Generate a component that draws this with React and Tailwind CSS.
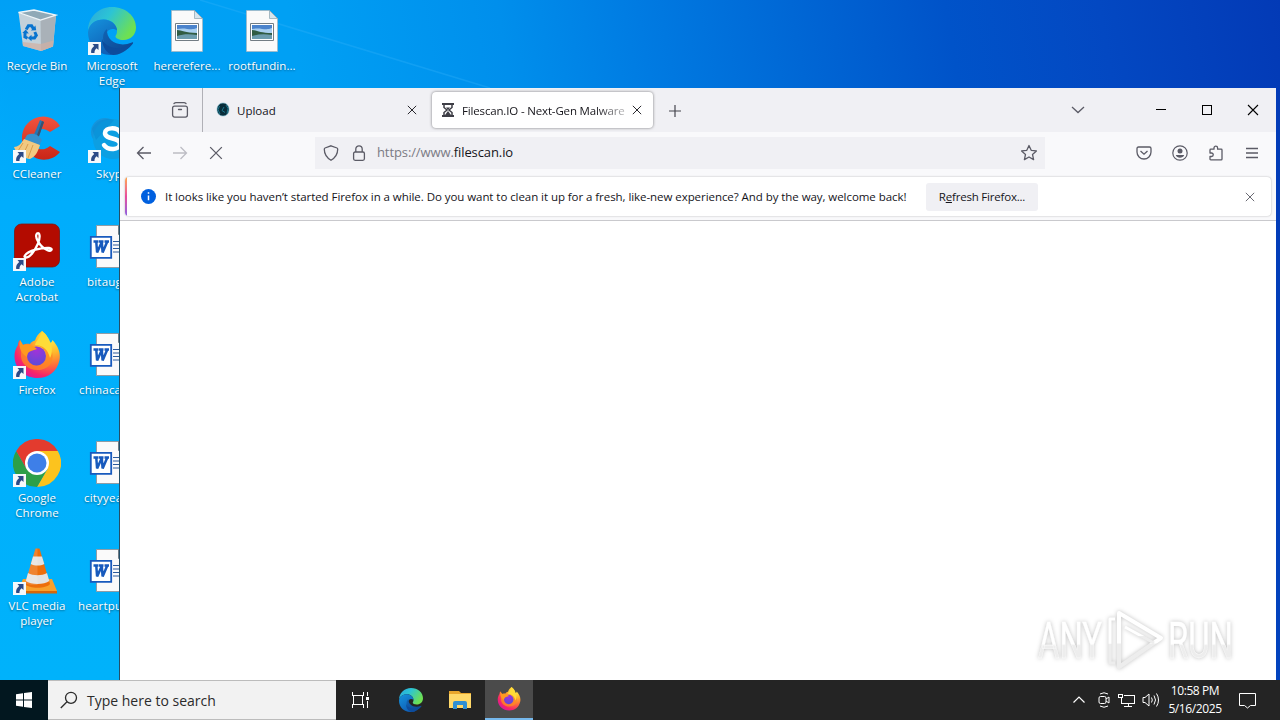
import React from 'react';

const ShortcutArrow = () => (
    <svg viewBox="0 0 13 13" className="absolute left-0 bottom-0 h-[13px] w-[13px]">
        <path d="M0 0h13v13H0z" fill="#f5f8fb" />
        <path d="M4.500 2h6v6L8.600 6.200C7 7.600 6.300 9 6.500 11H3.200C2.600 8.200 4 5.700 6.200 4z" fill="#2b4a87" />
    </svg>
);

const RecycleBin = () => (
    <svg viewBox="0 0 48 48" className="h-12 w-12">
        <path d="M5.500 5.500L10 39l18 5 12-4.500L43 8 27 11z" fill="#c3d1da" />
        <path d="M27.500 13L28 44l12-4.500L43 8z" fill="#a9b1b8" />
        <path d="M9.500 35l.5 4 18 5 12-4.500.6-6L28 37z" fill="#d0b0a4" opacity=".75" />
        <path d="M5.500 5.500L21 3l22 5-15.500 5z" fill="#8fa9b7" stroke="#eef5f9" strokeWidth="1.300" />
        <g fill="none" stroke="#0874cf" strokeWidth="3">
            <path d="M13.200 22.500l2.200-3.800h3.200l1.900 3.200" />
            <path d="M21.800 25l1.500 3.300-1.800 2.600h-3.600" />
            <path d="M14.500 31.200l-2.600-1.400.2-4" />
        </g>
        <path d="M18 23.500l5.200-.3-.8-4.800zM18.500 27.800v6.400l-3.700-3.100zM9.300 26l3.500-3.600 3 4.200z" fill="#0874cf" />
    </svg>
);

const EdgeLogo = ({ id, className }) => (
    <svg viewBox="0 0 48 48" className={className}>
        <defs>
            <linearGradient id={id + 'a'} x1="0" y1="0" x2="1" y2=".5">
                <stop offset="0" stopColor="#2aa5dc" />
                <stop offset=".45" stopColor="#2cc4d5" />
                <stop offset="1" stopColor="#6ee052" />
            </linearGradient>
            <linearGradient id={id + 'b'} x1="0" y1="0" x2=".6" y2="1">
                <stop offset="0" stopColor="#1593dd" />
                <stop offset="1" stopColor="#0f5eb5" />
            </linearGradient>
            <linearGradient id={id + 'c'} x1="0" y1="0" x2="1" y2="1">
                <stop offset="0" stopColor="#1164b4" />
                <stop offset="1" stopColor="#0d4590" />
            </linearGradient>
        </defs>
        <path d="M0 24C0 10 10.500 0 24 0c14 0 24 9.500 24 20.500C48 28 42.500 33 35.500 33c-5 0-8-2-8-3.500 0-1 1.500-2 1.500-5.500 0-6-5.500-11.500-13-11.500C7 12.500 1 18 0 24z" fill={`url(#${id}a)`} />
        <path d="M0 25C1 17 7 12.500 15.500 12.500c7.500 0 13.500 5 13.500 11-8-5-14 4-10 11 3 6 7 10 13 12C14 52 0 41 0 25z" fill={`url(#${id}b)`} />
        <path d="M19 22c-5 3-5.500 13 0 18.500 7.500 7.500 20 4.500 26-4 .5-1-.4-1.500-1.200-1C31 41 18 34 19 22z" fill={`url(#${id}c)`} />
        <path d="M14 32c3 9 19 13 30 4.500C39 44 32 48 25 48c-7-2-11-9-11-16z" fill="#0d4c9c" />
    </svg>
);

const PictureFile = () => (
    <svg viewBox="0 0 48 48" className="h-12 w-12">
        <path d="M8.500 3.500h23l8 8v33h-31z" fill="#fafafa" stroke="#a9b4bb" strokeWidth=".7" />
        <path d="M31.500 3.500v8h8z" fill="#d5e5ee" stroke="#8aa0ad" strokeWidth=".7" />
        <path d="M12.500 16.500h23v17h-23z" fill="#fff" stroke="#737d84" />
        <path d="M14 18h20v14H14z" fill="#a9cff0" />
        <path d="M14 18h20v3c-7 3-11-1-20 1z" fill="#4b83cc" />
        <path d="M14 23c5 0 8 3 20 3v3H14z" fill="#315c43" />
        <path d="M14 29c6-2 13-2 20-1v4H14z" fill="#6c9cae" />
    </svg>
);

const CCleaner = () => (
    <svg viewBox="0 0 48 48" className="h-12 w-12">
        <defs>
            <linearGradient id="cc" x1="0" y1="0" x2="0" y2="1">
                <stop stopColor="#f1533e" />
                <stop offset="1" stopColor="#c92517" />
            </linearGradient>
        </defs>
        <path d="M47 11L37 17c-9-7-17-1-17 8 0 8 9 13 17 6l10 6c-6 8-18 10-26 5C2 31 7 6 26 2c8-2 17 2 21 9z" fill="url(#cc)" />
        <path d="M27 5l4 2-6 17-5-2z" fill="#2477b5" />
        <path d="M29 6l2 1-6 17-2-1z" fill="#3c506c" />
        <path d="M14 20c6-3 12 0 15 5l-3 6-15-6z" fill="#3791cd" />
        <path d="M11 24l16 6c-2 7-5 12-10 14C9 43 3 38 1 32c4 0 7-3 10-8z" fill="#f2c981" />
        <path d="M10 28L5 36M15 29l-5 11M20 30l-5 13" stroke="#d99d4c" />
    </svg>
);

const Acrobat = () => (
    <svg viewBox="0 0 48 48" className="h-12 w-12">
        <rect x="1.500" y="1" width="45" height="43" rx="7" fill="#b30b00" stroke="#7e1712" strokeWidth=".8" />
        <path d="M12 32.500c3-5 17-8 24-7.500 5 .5 2 4-2 2-7-3-13-13-10-16.500 3-2 3.500 4 1 10-2.500 6-8 14-11.500 14-2 0-2.500-.8-1.500-2z" fill="none" stroke="#fff" strokeWidth="2.300" />
    </svg>
);

const FirefoxLogo = ({ id, className }) => (
    <svg viewBox="0 0 48 48" className={className}>
        <defs>
            <radialGradient id={id + 'a'} cx=".8" cy=".12" r="1">
                <stop offset="0" stopColor="#fff44f" />
                <stop offset=".35" stopColor="#ffb72b" />
                <stop offset=".6" stopColor="#ff7139" />
                <stop offset=".85" stopColor="#f5246a" />
                <stop offset="1" stopColor="#d817a0" />
            </radialGradient>
            <radialGradient id={id + 'b'} cx=".5" cy=".2" r=".8">
                <stop offset="0" stopColor="#a332d8" />
                <stop offset="1" stopColor="#5b4bd8" />
            </radialGradient>
        </defs>
        <path d="M29 0c5 4 6.500 7 7 12 2 0 3-1 3.500-3C45 15 48 22 46.500 29 44 41 35 47 24.500 47 12 47 2 38 1.500 26c-.3-5 1.500-9 3.500-12 0-2 .5-4 2-5l3 5c2-1 4-1.500 7-1 1-2 3-3 5-3.500C23 6 25 3 29 0z" fill={`url(#${id}a)`} />
        <path d="M17 13c-2 3 0 4 5 5-1 2-3 3-5.500 4-2 1-2 3-2 4C16 35 26 37 31 31c5-6 1-15-7-17 4-3 13 0 15 7 3 11-5 18-14 18C14 39 7 32 8 22c0-4 4-8 9-9z" fill="#ff8a22" opacity=".75" />
        <circle cx="23.500" cy="25" r="9.500" fill={`url(#${id}b)`} />
        <path d="M7 9l3 5c3-1 7 0 10 1l4 3c-2 1-4 1-6 2-3 1-4 3-4 6-5-3-9-9-7-17z" fill="#ff9a20" />
        <path d="M29 0c-2 7-6 10-7 14 8 0 13 5 15 13 5-8 0-21-8-27z" fill="#ffdc38" />
    </svg>
);

const Chrome = () => (
    <svg viewBox="0 0 48 48" className="h-12 w-12">
        <path d="M24 24L3.200 12A24 24 0 0 1 44.800 12z" fill="#e33b2e" />
        <path d="M24 12h20.800A24 24 0 0 1 24 48l10.400-18z" fill="#fcc31e" />
        <path d="M3.200 12A24 24 0 0 0 24 48l10.400-18L24 34 13.600 30z" fill="#2c9f48" />
        <path d="M3.200 12l10.400 18L24 12z" fill="#e33b2e" />
        <circle cx="24" cy="24" r="12" fill="#fff" />
        <circle cx="24" cy="24" r="9.500" fill="#3e7fe8" />
    </svg>
);

const Vlc = () => (
    <svg viewBox="0 0 48 48" className="h-12 w-12">
        <path d="M10 32h29l5 12H5z" fill="#f8a02c" />
        <path d="M5 44h39v2.500H5z" fill="#d66708" />
        <path d="M22.500 1.500h4L37 37c-4 5-21 5-25 0z" fill="#ed6e0b" />
        <path d="M20 9.500h9l2.300 7.500c-4 2-9.500 2-13.500 0zM15 26c5 3 14 3 19 0l2.300 8c-5 4-18.500 4-23.500 0z" fill="#e4e2e0" />
        <path d="M22.500 1.500h2V38c-5 0-9 0-12.500-2z" fill="#fff" opacity=".15" />
    </svg>
);

const WordFile = () => (
    <svg viewBox="0 0 48 48" className="h-12 w-12">
        <path d="M8.500 2.500h24l7 7v35h-31z" fill="#fafafa" stroke="#8f9ca5" />
        <path d="M30.500 2.500v9h9z" fill="#d9dee2" stroke="#707c85" />
        <path d="M25 18.500h11M25 22h11M25 25.500h11M25 29h11" stroke="#2c5b9d" />
        <path d="M2.800 13.800h20.400v21H2.800z" fill="#fff" stroke="#185abd" strokeWidth="1.800" />
        <path d="M5.500 18.500h5M11 18.500h4.500M16.500 18.500h4.500M8.300 19l.8 10.500 4.700-10.500 .8 10.500 4.500-10.500" fill="none" stroke="#185abd" strokeWidth="2.500" />
    </svg>
);

const Skype = () => (
    <svg viewBox="0 0 48 48" className="h-12 w-12">
        <circle cx="17" cy="17" r="14" fill="#1595dc" />
        <circle cx="25" cy="24" r="20" fill="#0d9fe2" />
        <path d="M4 14C8 5 18 2 26 5L8 25z" fill="#078ad2" opacity=".5" />
        <path d="M32 17c-3-5-15-5-15 1 0 7 15 4 15 11 0 6-12 7-16 1" fill="none" stroke="#fff" strokeWidth="4.500" strokeLinecap="round" />
    </svg>
);

const columns = [
    {
        left: 'left-0',
        items: [
            { icon: <RecycleBin />, label: 'Recycle Bin' },
            { icon: <CCleaner />, label: 'CCleaner', shortcut: true },
            { icon: <Acrobat />, label: 'Adobe Acrobat', shortcut: true },
            { icon: <FirefoxLogo id="fx" className="h-12 w-12" />, label: 'Firefox', shortcut: true },
            { icon: <Chrome />, label: 'Google Chrome', shortcut: true },
            { icon: <Vlc />, label: 'VLC media player', shortcut: true }
        ]
    },
    {
        left: 'left-[75px]',
        items: [
            { icon: <EdgeLogo id="edge" className="h-12 w-12" />, label: 'Microsoft Edge', shortcut: true },
            { icon: <Skype />, label: 'Skype', shortcut: true, pad: 'pl-[21px]' },
            { icon: <WordFile />, label: 'bitaug', pad: 'pl-[12px]' },
            { icon: <WordFile />, label: 'chinaca', pad: 'pl-[4px]' },
            { icon: <WordFile />, label: 'cityyea', pad: 'pl-[9px]' },
            { icon: <WordFile />, label: 'heartpu', pad: 'pl-[3px]' }
        ]
    },
    { left: 'left-[150px]', items: [{ icon: <PictureFile />, label: 'hererefere...' }] },
    { left: 'left-[225px]', items: [{ icon: <PictureFile />, label: 'rootfundin...' }] }
];

const DesktopItem = ({ icon, label, shortcut, pad }) => (
    <div className="flex h-[108px] w-[74px] flex-col items-center pt-[7px]">
        <div className="relative h-12 w-12 shrink-0">
            {icon}
            {shortcut && <ShortcutArrow />}
        </div>
        <div className={`mt-[3px] w-full text-[11.5px] leading-[15px] text-white [text-shadow:0_1px_2px_rgba(0,0,0,0.45)] ${pad ? pad + ' whitespace-nowrap tracking-[0.2px]' : 'text-center tracking-[0.05px]'}`}>
            {label}
        </div>
    </div>
);

const Close = ({ className }) => (
    <svg viewBox="0 0 12 12" className={className} fill="none" stroke="currentColor" strokeWidth="1.100">
        <path d="M1 1l10 10M11 1L1 11" />
    </svg>
);

const TabBar = () => (
    <div className="flex h-11 shrink-0 bg-[#f0f0f4] text-[11.5px] text-[#15141a]">
        <div className="flex w-[83px] items-center border-r border-[#b0b0b6] pl-[51px]">
            <svg viewBox="0 0 18 18" className="h-[18px] w-[18px]" fill="none" stroke="#5b5b66" strokeWidth="1.300" strokeLinecap="round">
                <rect x="1.600" y="5.100" width="14.800" height="11" rx="2" />
                <path d="M3 2.500Q4 1.600 5 1.600h8q1 0 2 .9M7.500 8.500h3" />
            </svg>
        </div>
        <div className="flex w-[229px] items-center pl-[12px]">
            <svg viewBox="0 0 16 16" className="h-4 w-4">
                <path d="M8 1c4 0 6 3.500 6 6.500S12 14 8 14s-6-3.500-6-6.500S4 1 8 1z" fill="#082d3a" stroke="#79bdd4" strokeWidth=".6" />
                <path d="M4.500 4L3 7.500 5 12M11 3l2 3.500-1 5M9 5L7 8.500l3 2" fill="none" stroke="#218aa5" strokeWidth=".8" />
            </svg>
            <span className="ml-[6px] w-[170px] pt-[2px]">Upload</span>
            <Close className="h-[10px] w-[10px]" />
        </div>
        <div className="mt-1 flex h-9 w-[221px] items-center rounded bg-white pl-[9px] shadow-[0_0_3px_rgba(0,0,0,0.5)]">
            <svg viewBox="0 0 14 16" className="h-4 w-[14px]" fill="none" stroke="#3e3e46">
                <path d="M1 2h12M1 14h12" strokeWidth="2" />
                <path d="M3 2v3.500L6 8l-3 2.500V14M11 2v3.500L8 8l3 2.500V14" strokeWidth="1.500" />
                <path d="M5 5.500h4L7 8zM7 9l3 4H4z" fill="#3e3e46" stroke="none" />
            </svg>
            <span className="ml-[7px] w-[167px] overflow-hidden pt-[2px] tracking-[-0.16px] whitespace-nowrap [mask-image:linear-gradient(to_right,black_80%,transparent_105%)]">
                Filescan.IO - Next-Gen Malware
            </span>
            <Close className="ml-[3px] h-[10px] w-[10px] shrink-0" />
        </div>
        <div className="flex w-[43px] items-center justify-center pt-px">
            <svg viewBox="0 0 14 14" className="h-[14px] w-[14px]" stroke="#45454d" strokeWidth="1.200"><path d="M7 1v12M1 7h12" /></svg>
        </div>
        <div className="ml-auto flex items-center pr-[17px] text-black">
            <svg viewBox="0 0 14 14" className="mr-[70px] h-[14px] w-[14px]" fill="none" stroke="#5b5b66" strokeWidth="1.300"><path d="M1 4l6 5.500L13 4" /></svg>
            <svg viewBox="0 0 12 12" className="mr-[34px] h-3 w-3" stroke="currentColor" shapeRendering="crispEdges"><path d="M1 5.500h10" /></svg>
            <svg viewBox="0 0 12 12" className="mr-[34px] h-3 w-3" fill="none" stroke="currentColor" shapeRendering="crispEdges"><path d="M1.500 1.500h9v9h-9z" /></svg>
            <Close className="h-3 w-3" />
        </div>
    </div>
);

const Toolbar = () => (
    <div className="flex h-[41px] shrink-0 items-center bg-[#f9f9fb] text-[#5b5b66]">
        <svg viewBox="0 0 16 16" className="ml-4 h-4 w-4" fill="none" stroke="currentColor" strokeWidth="1.300"><path d="M15 8H1.500M7.500 2L1.500 8l6 6" /></svg>
        <svg viewBox="0 0 16 16" className="ml-5 h-4 w-4 text-[#bdbdc4]" fill="none" stroke="currentColor" strokeWidth="1.300"><path d="M1 8h13.500M8.500 2l6 6-6 6" /></svg>
        <Close className="ml-[21px] h-[14px] w-[14px]" />
        <div className="ml-[92px] flex h-8 w-[730px] items-center bg-[#f0f0f4] pl-2">
            <svg viewBox="0 0 16 16" className="h-4 w-4" fill="none" stroke="currentColor" strokeWidth="1.300"><path d="M8 .8l6 2.200q.7.300.7 1.200c0 5-2.500 8.500-6.700 11C3.800 12.700 1.300 9.200 1.300 4.200q0-.9.7-1.200z" /></svg>
            <svg viewBox="0 0 16 16" className="ml-3 h-4 w-4" fill="none" stroke="currentColor" strokeWidth="1.300"><rect x="2.600" y="7" width="10.800" height="8.300" rx="1.500" /><path d="M4.800 7V4a3.200 3.200 0 0 1 6.400 0v3" /></svg>
            <span className="ml-[10px] pt-px text-[13px] tracking-[-0.1px] text-[#7b7b84]">https://www.<span className="text-[#15141a]">filescan.io</span></span>
            <svg viewBox="0 0 18 18" className="mr-[7px] ml-auto h-[18px] w-[18px]" fill="none" stroke="currentColor" strokeWidth="1.300" strokeLinejoin="round"><path d="M9 1.500l2.200 4.800 5.200.6-3.900 3.500 1.100 5.200L9 13l-4.600 2.600 1.100-5.200L1.600 6.900l5.200-.6z" /></svg>
        </div>
        <div className="ml-auto flex items-center gap-5 pr-4">
            <svg viewBox="0 0 16 16" className="h-4 w-4" fill="none" stroke="currentColor" strokeWidth="1.300"><path d="M2.500 2h11q1.500 0 1.500 1.500V7A7 7 0 0 1 1 7V3.500Q1 2 2.500 2z" /><path d="M4.500 6L8 9.200 11.500 6" /></svg>
            <svg viewBox="0 0 16 16" className="h-4 w-4" fill="none" stroke="currentColor" strokeWidth="1.200"><circle cx="8" cy="8" r="7.200" /><circle cx="8" cy="6" r="2.500" fill="currentColor" stroke="none" /><path d="M3.800 10h8.400c-1 3.500-7.400 3.500-8.400 0z" fill="currentColor" stroke="none" /></svg>
            <svg viewBox="0 0 16 16" className="h-4 w-4" fill="none" stroke="currentColor" strokeWidth="1.300" strokeLinejoin="round"><path d="M2 8V5q0-.8.8-.8H6V3a1.800 1.800 0 0 1 3.600 0v1.200h3.600q.8 0 .8.800v9q0 .9-.8.9H2.800q-.8 0-.8-.9v-2.500h1.500a1.700 1.700 0 0 0 0-3.500z" /></svg>
            <svg viewBox="0 0 16 16" className="h-4 w-4" stroke="currentColor" strokeWidth="1.300"><path d="M2 3.500h12M2 8h12M2 12.500h12" /></svg>
        </div>
    </div>
);

const InfoBar = () => (
    <div className="h-12 shrink-0 border-b border-[#c9c9cd] bg-[#f9f9fb] px-[5px] pt-1">
        <div className="flex h-[39px] items-center overflow-hidden rounded bg-white pr-4 text-[11.5px] text-[#15141a] shadow-[0_0_2px_rgba(0,0,0,0.3)]">
            <div className="h-full w-[2px] bg-linear-to-b from-[#ffa640] via-[#e84a9c] to-[#8b5ce0]" />
            <svg viewBox="0 0 16 16" className="ml-[14px] h-[15px] w-[15px] shrink-0"><circle cx="8" cy="8" r="8" fill="#0060df" /><path d="M8 3.500v1.600M8 7v5" stroke="#fff" strokeWidth="1.600" /></svg>
            <span className="ml-[9px] w-[761px] pt-px tracking-[-0.06px] whitespace-nowrap">
                It looks like you haven’t started Firefox in a while. Do you want to clean it up for a fresh, like-new experience? And by the way, welcome back!
            </span>
            <div className="flex h-7 w-[112px] items-center justify-center rounded-[3px] bg-[#f0f0f4] pt-px tracking-[-0.2px]">
                <span>R<span className="underline">e</span>fresh Firefox...</span>
            </div>
            <Close className="ml-auto h-[10px] w-[10px] text-[#5b5b66]" />
        </div>
    </div>
);

const Watermark = () => (
    <svg viewBox="0 0 200 66" className="absolute right-[41px] bottom-[6px] h-[66px] w-[200px] overflow-visible [filter:drop-shadow(0_0_2px_rgba(0,0,0,0.25))]">
        <defs>
            <linearGradient id="fade" x1="0" y1="0" x2="0" y2="1">
                <stop offset=".55" stopColor="#ffffff" />
                <stop offset=".58" stopColor="#ededed" />
            </linearGradient>
        </defs>
        <g fill="url(#fade)" stroke="#fff" strokeWidth=".4" fontFamily="Roboto, sans-serif" fontSize="50">
            <text x="3" y="50" textLength="64" lengthAdjust="spacingAndGlyphs">ANY</text>
            <text x="133" y="50" textLength="65" lengthAdjust="spacingAndGlyphs">RUN</text>
        </g>
        <g fill="none" stroke="url(#fade)" strokeWidth="4" strokeLinejoin="round">
            <path d="M84 50V5l42 25-42 29V5" />
            <path d="M80 11h-5v44h5" strokeWidth="3" />
            <path d="M90 19l29 16" strokeWidth="3" />
        </g>
    </svg>
);

const BrowserWindow = () => (
    <div className="absolute top-[88px] left-[119px] flex h-[592px] w-[1157px] flex-col border-l border-[#244f68] bg-white">
        <TabBar />
        <Toolbar />
        <InfoBar />
        <div className="relative flex-1 bg-white">
            <Watermark />
        </div>
    </div>
);

const Taskbar = () => (
    <div className="flex h-10 shrink-0 bg-[#242424] text-white">
        <div className="flex w-12 items-center justify-center bg-[#02171f]">
            <svg viewBox="0 0 16 16" className="h-4 w-4" fill="#fff"><path d="M0 2.200l7-1v6.300H0zM8 1.100L16 0v7.500H8zM0 8.500h7v6.300l-7-1zM8 8.500h8V16l-8-1.100z" /></svg>
        </div>
        <div className="flex w-72 items-center border-t border-b border-[#bcbcbc] bg-[#f2f2f2] pl-3 text-[#2b2b2b]">
            <svg viewBox="0 0 18 18" className="h-[18px] w-[18px]" fill="none" stroke="currentColor" strokeWidth="1.300"><circle cx="11" cy="6.800" r="5.500" /><path d="M7 10.800L.8 17" /></svg>
            <span className="ml-[9px] pt-px text-[14px]">Type here to search</span>
        </div>
        <div className="flex w-[48px] items-center justify-center">
            <svg viewBox="0 0 17 16" className="h-4 w-[17px]" fill="none" stroke="#fff" shapeRendering="crispEdges"><path d="M.5 0v3.500h11V0M.5 16v-3.500h11V16M1.500 3.500h9v9h-9zM15.500 0v4M15.500 9v7" /><path d="M14 5h3v3h-3z" fill="#fff" stroke="none" /></svg>
        </div>
        <div className="flex w-[54px] items-center justify-center">
            <EdgeLogo id="edgeTask" className="h-6 w-6" />
        </div>
        <div className="flex w-[47px] items-center justify-center pr-[3px]">
            <svg viewBox="0 0 22 20" className="h-5 w-[22px]"><path d="M0 1h10l2 2h10v15H0z" fill="#e9a62c" /><path d="M0 4h22v14H0z" fill="#ffd869" /><path d="M4 19v-6q0-2 2-2h10q2 0 2 2v6h-4v-4H8v4z" fill="#2e8fd4" /></svg>
        </div>
        <div className="flex w-12 items-center justify-center border-b-2 border-[#76b9ed] bg-[#4b4b4b]">
            <FirefoxLogo id="fxTask" className="h-6 w-6" />
        </div>
        <div className="ml-auto flex items-center">
            <svg viewBox="0 0 12 12" className="h-3 w-3" fill="none" stroke="#fff" strokeWidth="1.200"><path d="M.5 8.500L6 3l5.500 5.500" /></svg>
            <svg viewBox="0 0 12 16" className="ml-[13px] h-4 w-3" fill="none" stroke="#fff"><rect x="1" y="4.500" width="7" height="7" rx="1.500" /><path d="M8 7l3-2v6L8 9M2 2q4-2.500 8 0M2 14q4 2.500 8 0" /></svg>
            <svg viewBox="0 0 17 14" className="ml-2 h-[14px] w-[17px]" fill="none" stroke="#fff" shapeRendering="crispEdges"><path d="M5.500 2.500h11v8h-13V5M10.500 10.500v3M6 13.500h8M.5 1.500h4v3h-4z" /></svg>
            <svg viewBox="0 0 18 16" className="ml-[7px] h-4 w-[18px]" fill="none" stroke="#fff"><path d="M1 5.500h2l4-3.500v12l-4-3.500H1zM9.500 5.500q1.600 2.500 0 5M12 3.500q3 4.500 0 9M14.500 1.500q4 6.500 0 13" /></svg>
            <div className="ml-[6px] w-[58px] text-center text-[12px] leading-[18px] tracking-[-0.4px] whitespace-nowrap">
                <div>10:58 PM</div>
                <div>5/16/2025</div>
            </div>
            <svg viewBox="0 0 17 17" className="mr-[24px] ml-[15px] h-[17px] w-[17px]" fill="none" stroke="#fff"><path d="M.5 1.500h16v12h-5L8.500 16l-3-2.500h-5z" /></svg>
        </div>
    </div>
);

const App = () => {
    return (
        <div className="flex h-[720px] w-[1280px] flex-col overflow-hidden bg-[#0a40b4] font-['Open_Sans','Noto_Sans',sans-serif]">
            <div className="relative flex-1 overflow-hidden bg-[linear-gradient(80deg,#00b0fb_0%,#00a0f6_8%,#00a0f4_29%,#008fec_44%,#007be2_54%,#0067d5_65%,#0053c9_76%,#0348c2_87%,#033ab6_100%)]">
                <div className="absolute inset-y-0 left-0 w-[120px] bg-linear-to-b from-transparent via-[#00adfc] via-30% to-[#00b2fb]" />
                <svg viewBox="0 0 300 90" className="absolute top-0 left-[200px] h-[90px] w-[300px]"><path d="M0 0L290 88" stroke="#38b4fa" strokeWidth="1.500" opacity=".3" /></svg>
                {columns.map((column, index) => (
                    <div key={index} className={`absolute top-0 flex flex-col ${column.left}`}>
                        {column.items.map((item) => (
                            <DesktopItem key={item.label} {...item} />
                        ))}
                    </div>
                ))}
                <BrowserWindow />
            </div>
            <Taskbar />
        </div>
    );
};

export default App;
